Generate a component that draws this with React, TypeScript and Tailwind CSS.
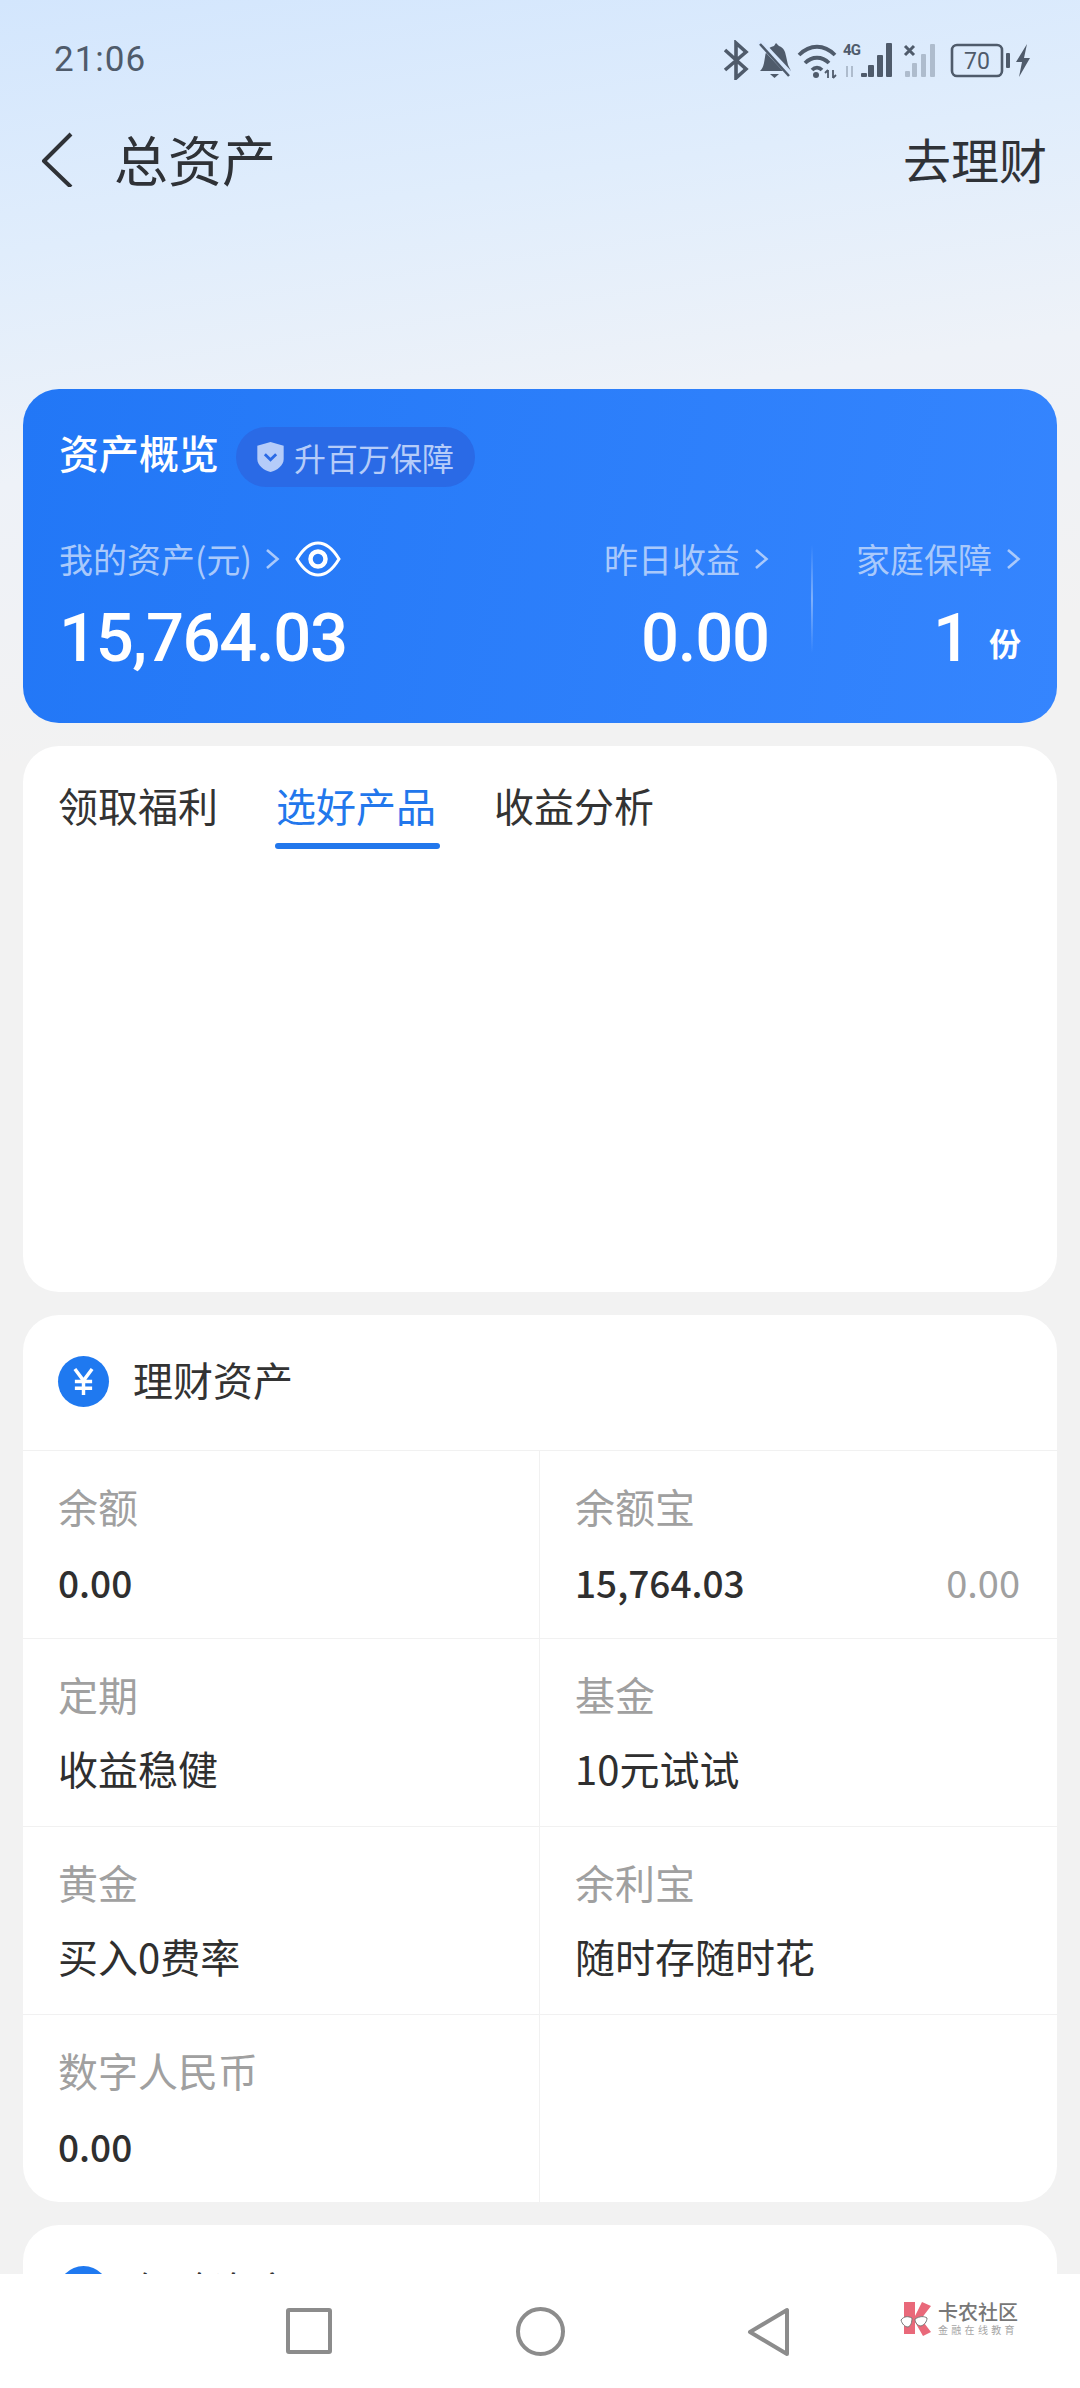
import React from 'react';

const cjk = { fontFamily: '"Noto Sans CJK SC", Roboto, sans-serif' };
const digits = { fontFamily: 'Roboto, sans-serif' };

const Chevron: React.FC<{ className?: string }> = ({ className }) => (
  <svg viewBox="0 0 15 22" className={className} fill="none" stroke="currentColor" strokeWidth={2.6} strokeLinejoin="miter">
    <path d="M2 2l10.500 9L2 20" />
  </svg>
);

const StatusIcons: React.FC = () => (
  <svg viewBox="0 0 320 40" className="h-[40px] w-[320px] text-[#4f5b6b]">
    {/* bluetooth */}
    <path d="M5 10l21 19-10 9V3l10 9L5 30" fill="none" stroke="currentColor" strokeWidth={3.6} />
    {/* muted bell */}
    <path d="M40 31c4-4 4-8 5-14 1-8 5-10 9-11l2-3 3 3c5 2 6 5 7 10l2 9 3 6z" fill="currentColor" />
    <path d="M50 34h9l-4.500 4z" fill="currentColor" />
    <path d="M39 1l30 32" stroke="#d6e7fd" strokeWidth={6} />
    <path d="M40 4l29 32" stroke="currentColor" strokeWidth={2.500} />
    {/* wifi */}
    <path d="M79 15c11-11 25-11 36 0M85 23c7-7 17-7 24 0M92 30c3-3 7-3 10 0" fill="none" stroke="currentColor" strokeWidth={3.800} />
    <circle cx="96" cy="35" r="3" fill="currentColor" />
    <path d="M108 30v8M113 30v8M105 33l3-3M116 35l-3 3" stroke="currentColor" strokeWidth={1.800} fill="none" />
    {/* 4G */}
    <text x="123" y="15" fontSize="15" fontWeight="700" fill="currentColor" style={digits} textLength="18">4G</text>
    <path d="M127 26v11M132 26v11" stroke="#aebccd" strokeWidth={2} />
    {[[141, 33], [148, 25], [157, 15], [166, 3]].map(([x, y]) => (
      <rect key={x} x={x} y={y} width="6" height={37 - y} rx="1" fill="currentColor" />
    ))}
    {/* no sim signal */}
    <path d="M185 6l9 9M194 6l-9 9" stroke="currentColor" strokeWidth={3} />
    {[[185, 31], [192, 23], [201, 14], [210, 4]].map(([x, y]) => (
      <rect key={x} x={x} y={y} width="5" height={37 - y} rx="1" fill="#aebccd" />
    ))}
    {/* battery */}
    <rect x="232" y="5" width="50" height="31" rx="5" fill="none" stroke="currentColor" strokeWidth={2.600} />
    <text x="257" y="29" fontSize="23" textAnchor="middle" fill="currentColor" style={digits}>70</text>
    <rect x="286" y="13" width="4" height="15" rx="1" fill="currentColor" />
    <path d="M307 4l-11 18h6l-3 15 11-19h-6z" fill="currentColor" />
  </svg>
);

interface AssetCell {
  label: string;
  value?: string;
  extra?: string;
  latin?: boolean;
}

const cells: AssetCell[] = [
  { label: '余额', value: '0.00', latin: true },
  { label: '余额宝', value: '15,764.03', extra: '0.00', latin: true },
  { label: '定期', value: '收益稳健' },
  { label: '基金', value: '10元试试' },
  { label: '黄金', value: '买入0费率' },
  { label: '余利宝', value: '随时存随时花' },
  { label: '数字人民币', value: '0.00', latin: true },
  { label: '' },
];

const Cell: React.FC<{ cell: AssetCell; index: number }> = ({ cell, index }) => (
  <div className={`flex h-[188px] flex-col border-t border-[#f1f1f1] pl-[35px] pt-[27px] ${index % 2 === 0 ? 'border-r' : 'pr-[35px]'}`}>
    {cell.label && (
      <>
        <div className="text-[40px] leading-[56px] text-[#a0a0a0]">{cell.label}</div>
        <div className="mt-[18px] flex items-center justify-between text-[40px] leading-[56px] text-[#2f2f2f]">
          <span className={cell.latin ? 'relative top-[2px] text-[37px] font-medium' : 'font-normal'}>{cell.value}</span>
          {cell.extra && <span className="relative top-[2px] -left-[2px] text-[38px] text-[#a0a0a0]">{cell.extra}</span>}
        </div>
      </>
    )}
  </div>
);

export default function App() {
  return (
    <div
      className="flex h-[2388px] w-[1080px] flex-col overflow-hidden bg-[linear-gradient(172deg,#d3e6fd_0px,#e0edfc_250px,#eef2f8_480px,#f2f2f2_760px)]"
      style={cjk}
    >
      <div className="min-h-0 flex-1 overflow-hidden">
        {/* status bar */}
        <div className="flex h-[118px] items-center justify-between pl-[54px] pr-[40px] pt-[2px]">
          <span className="text-[35px] tracking-[1px] text-[#4f5b6b]" style={digits}>21:06</span>
          <StatusIcons />
        </div>

        {/* title bar */}
        <div className="flex h-[82px] items-center justify-between pl-[40px] pr-[33px]">
          <div className="flex items-center">
            <svg viewBox="0 0 34 56" className="h-[56px] w-[34px] text-[#2f3237]" fill="none" stroke="currentColor" strokeWidth={4}>
              <path d="M31 3L4 30l27 26" strokeLinejoin="round" />
            </svg>
            <span className="ml-[40px] text-[54px] leading-none text-[#2f3237]">总资产</span>
          </div>
          <span className="relative -top-[1px] text-[48px] leading-none text-[#2f3237]">去理财</span>
        </div>

        <div className="flex flex-col gap-[23px] px-[23px] pt-[189px]">
          {/* overview */}
          <div className="h-[334px] rounded-[36px] bg-[linear-gradient(100deg,#2277f6,#3585fe)] px-[36px] pt-[33px]">
            <div className="flex h-[60px] items-center">
              <span className="text-[40px] font-medium leading-[60px] text-white">资产概览</span>
              <div className="ml-[17px] mt-[10px] flex h-[60px] w-[239px] items-center rounded-full bg-[#2a6ae6] pl-[20px]">
                <svg viewBox="0 0 30 34" className="h-[32px] w-[29px]">
                  <path d="M15 1l14 4v14c0 7-7 12-14 14C8 31 1 26 1 19V5z" fill="#b5ccf9" />
                  <path d="M9 14l6 6 6-6" fill="none" stroke="#2a6ae6" strokeWidth={3} />
                </svg>
                <span className="ml-[9px] text-[32px] text-[#b5ccf9]">升百万保障</span>
              </div>
            </div>

            <div className="mt-[53px] flex">
              <div className="flex-1">
                <div className="flex h-[48px] items-center text-[#a9c9fb]">
                  <span className="text-[34px] leading-none">我的资产(元)</span>
                  <Chevron className="ml-[13px] h-[22px] w-[15px]" />
                  <svg viewBox="0 0 46 38" className="ml-[15px] h-[38px] w-[46px] text-white" fill="none" stroke="currentColor" strokeWidth={3}>
                    <path d="M2 19C8 9 15 3 23 3s15 6 21 16c-6 10-13 16-21 16S8 29 2 19z" />
                    <circle cx="23" cy="19" r="7.500" strokeWidth={4.5} />
                  </svg>
                </div>
                <div className="mt-[15px] text-[67px] font-medium leading-[80px] tracking-[-1.4px] text-white" style={digits}>15,764.03</div>
              </div>
              <div className="w-[200px] text-right">
                <div className="flex h-[48px] items-center justify-end text-[#a9c9fb]">
                  <span className="text-[34px] leading-none">昨日收益</span>
                  <Chevron className="ml-[14px] h-[22px] w-[15px]" />
                </div>
                <div className="mt-[15px] text-[67px] font-medium leading-[80px] tracking-[-1.2px] text-white" style={digits}>0.00</div>
              </div>
              <div className="ml-[42px] mr-[41px] mt-[10px] h-[108px] w-[2px] bg-[linear-gradient(to_bottom,transparent,#7fb0fb,transparent)]" />
              <div className="w-[167px]">
                <div className="flex h-[48px] items-center justify-end text-[#a9c9fb]">
                  <span className="text-[34px] leading-none">家庭保障</span>
                  <Chevron className="ml-[14px] h-[22px] w-[15px]" />
                </div>
                <div className="mt-[15px] flex items-baseline justify-end text-white">
                  <span className="text-[67px] font-medium leading-[80px]" style={digits}>1</span>
                  <span className="relative -top-[5px] ml-[18px] text-[32px] font-bold">份</span>
                </div>
              </div>
            </div>
          </div>

          {/* tabs */}
          <div className="h-[546px] rounded-[36px] bg-white pl-[35px] pt-[31px]">
            <div className="flex gap-[58px] text-[40px] leading-[56px] text-[#333333]">
              <span>领取福利</span>
              <div className="relative text-[#2277ec]">
                选好产品
                <div className="absolute -bottom-[16px] -left-[1px] h-[6px] w-[165px] rounded-full bg-[#2277ec]" />
              </div>
              <span>收益分析</span>
            </div>
          </div>

          {/* wealth assets */}
          <div className="rounded-[36px] bg-white">
            <div className="flex h-[135px] items-center pb-[3px] pl-[35px]">
              <div className="flex h-[51px] w-[51px] items-center justify-center rounded-full bg-[#1f79f0]">
                <svg viewBox="0 0 24 30" className="h-[29px] w-[23px]" fill="none" stroke="white" strokeWidth={3.600}>
                  <path d="M3 2l9 12 9-12M12 14v15M3 15h18M3 22h18" />
                </svg>
              </div>
              <span className="relative -top-[2px] ml-[24px] text-[40px] leading-[51px] text-[#333333]">理财资产</span>
            </div>
            <div className="grid grid-cols-[517px_517px]">
              {cells.map((cell, i) => (
                <Cell key={i} cell={cell} index={i} />
              ))}
            </div>
          </div>

          {/* next card, cut off by the nav bar */}
          <div className="h-[200px] rounded-[36px] bg-white pl-[35px] pt-[41px]">
            <div className="flex items-center">
              <div className="h-[51px] w-[51px] rounded-full bg-[#1f79f0]" />
              <span className="relative -top-[2px] ml-[24px] text-[40px] leading-[51px] text-[#333333]">保险资产</span>
            </div>
          </div>
        </div>
      </div>

      {/* nav bar */}
      <div className="flex h-[114px] shrink-0 items-start bg-white">
        <div className="ml-[286px] mt-[34px] h-[46px] w-[46px] rounded-[3px] border-[4px] border-[#8c8c8c]" />
        <div className="ml-[184px] mt-[33px] h-[49px] w-[49px] rounded-full border-[4px] border-[#8c8c8c]" />
        <svg viewBox="0 0 43 50" className="ml-[182px] mt-[33px] h-[50px] w-[43px] text-[#8c8c8c]" fill="none" stroke="currentColor" strokeWidth={4} strokeLinejoin="round">
          <path d="M40 3v44L3 25z" />
        </svg>
        <div className="ml-[110px] mt-[27px] flex items-start">
          <svg viewBox="0 0 32 35" className="h-[35px] w-[32px]">
            <path d="M4 1h11v32H4z" fill="#e9697a" />
            <path d="M15 15L22 1l9 4-10 13 10 13-8 4-8-14z" fill="#e9697a" />
            <path d="M1 19c3-4 7-4 11-2 0 4-1 8-4 9-3 0-6-3-7-7zM27 17c-3-2-7-2-12 1 0 4 3 7 6 7 3-1 6-4 6-8z" fill="white" stroke="#777777" strokeWidth={1} />
          </svg>
          <div className="ml-[6px] flex flex-col">
            <span className="text-[20px] font-medium leading-[22px] text-[#777777]">卡农社区</span>
            <span className="mt-[1px] text-[10px] leading-[12px] tracking-[3.3px] text-[#a5a5a5]">金融在线教育</span>
          </div>
        </div>
      </div>
    </div>
  );
}
